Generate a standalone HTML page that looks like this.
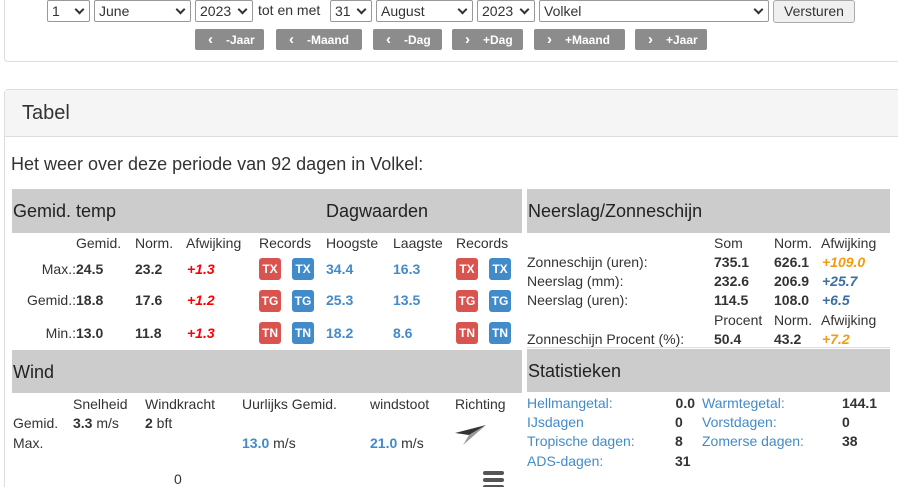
<!DOCTYPE html>
<html style="height:487px;overflow:hidden"><head><meta charset="utf-8"><style>
*{margin:0;padding:0;box-sizing:border-box}
html,body{width:898px;height:487px;overflow:hidden}
body{background:#fff;font-family:"Liberation Sans",sans-serif;color:#333;font-size:14px}
#w{position:relative;width:898px;height:487px;overflow:hidden}
.a{position:absolute;white-space:nowrap}
.sel{position:absolute;top:0;height:22px;border:1px solid #999;border-radius:2px;background:#fff;font-size:14px;padding:1px 4px;line-height:18px}
.sel:after{content:"";position:absolute;right:6px;top:5px;width:5px;height:5px;border-right:2px solid #333;border-bottom:2px solid #333;transform:rotate(45deg)}
.btn{position:absolute;top:29px;height:21px;background:#8c8c8c;color:#fff;font-size:12px;font-weight:bold;line-height:21px;border-radius:2px;padding-left:13px}
.btn b{font-weight:bold;margin-right:13px;font-size:15px}
.bar{position:absolute;background:#ccc;font-size:18px;line-height:44px;padding-left:1px;color:#222}
.bd{position:absolute;width:22px;height:22px;border-radius:3px;color:#fff;font-weight:bold;font-size:12px;text-align:center;line-height:22px}
.r{background:#d9534f}.b{background:#428bca}
.bl{color:#428bca;font-weight:bold}
.bo{font-weight:bold}
.ri{color:#f00;font-weight:bold;font-style:italic}
.or{color:#f39c12;font-weight:bold;font-style:italic}
.bi{color:#3a6ea5;font-weight:bold;font-style:italic}
.lk{color:#428bca}
</style></head><body><div id="w">
<div class="a" style="left:4px;top:0;width:894px;height:62px;border:1px solid #ddd;border-top:none;border-right:none;border-radius:0 0 0 4px"></div>
<div class="sel" style="left:47px;width:43px">1</div>
<div class="sel" style="left:94px;width:97px">June</div>
<div class="sel" style="left:195px;width:58px">2023</div>
<div class="a" style="left:258px;top:2px">tot en met</div>
<div class="sel" style="left:330px;width:42px">31</div>
<div class="sel" style="left:376px;width:97px">August</div>
<div class="sel" style="left:477px;width:58px">2023</div>
<div class="sel" style="left:539px;width:230px">Volkel</div>
<div class="a" style="left:773px;top:0;width:82px;height:23px;border:1px solid #aaa;border-radius:3px;background:#f0f0f0;text-align:center;line-height:21px">Versturen</div>
<div class="btn" style="left:195px;width:69px"><b>‹</b>-Jaar</div>
<div class="btn" style="left:276px;width:86px"><b>‹</b>-Maand</div>
<div class="btn" style="left:373px;width:69px"><b>‹</b>-Dag</div>
<div class="btn" style="left:452px;width:71px"><b>›</b>+Dag</div>
<div class="btn" style="left:534px;width:91px"><b>›</b>+Maand</div>
<div class="btn" style="left:635px;width:72px"><b>›</b>+Jaar</div>

<div class="a" style="left:4px;top:89px;width:894px;height:398px;border:1px solid #ddd;border-bottom:none;border-right:none;border-radius:4px 0 0 0"></div>
<div class="a" style="left:5px;top:90px;width:893px;height:47px;background:#f5f5f5;border-bottom:1px solid #ddd"></div>
<div class="a" style="left:22px;top:102px;font-size:20px">Tabel</div>
<div class="a" style="left:11px;top:154px;font-size:18px">Het weer over deze periode van 92 dagen in Volkel:</div>

<div class="bar" style="left:12px;top:189px;width:510px;height:44px">Gemid. temp<span style="position:absolute;left:314px">Dagwaarden</span></div>
<div class="bar" style="left:527px;top:189px;width:363px;height:44px">Neerslag/Zonneschijn</div>

<div class="a" style="left:76px;top:235px">Gemid.</div>
<div class="a" style="left:135px;top:235px">Norm.</div>
<div class="a" style="left:186px;top:235px">Afwijking</div>
<div class="a" style="left:259px;top:235px">Records</div>
<div class="a" style="left:326px;top:235px">Hoogste</div>
<div class="a" style="left:393px;top:235px">Laagste</div>
<div class="a" style="left:456px;top:235px">Records</div>

<div class="a" style="left:0;width:76px;text-align:right;top:261px">Max.:</div>
<div class="a bo" style="left:76px;top:261px">24.5</div>
<div class="a bo" style="left:135px;top:261px">23.2</div>
<div class="a ri" style="left:187px;top:261px">+1.3</div>
<div class="bd r" style="left:259px;top:258px">TX</div><div class="bd b" style="left:292px;top:258px">TX</div>
<div class="a bl" style="left:326px;top:261px">34.4</div>
<div class="a bl" style="left:393px;top:261px">16.3</div>
<div class="bd r" style="left:456px;top:258px">TX</div><div class="bd b" style="left:489px;top:258px">TX</div>

<div class="a" style="left:0;width:76px;text-align:right;top:292px">Gemid.:</div>
<div class="a bo" style="left:76px;top:292px">18.8</div>
<div class="a bo" style="left:135px;top:292px">17.6</div>
<div class="a ri" style="left:187px;top:292px">+1.2</div>
<div class="bd r" style="left:259px;top:290px">TG</div><div class="bd b" style="left:292px;top:290px">TG</div>
<div class="a bl" style="left:326px;top:292px">25.3</div>
<div class="a bl" style="left:393px;top:292px">13.5</div>
<div class="bd r" style="left:456px;top:290px">TG</div><div class="bd b" style="left:489px;top:290px">TG</div>

<div class="a" style="left:0;width:76px;text-align:right;top:325px">Min.:</div>
<div class="a bo" style="left:76px;top:325px">13.0</div>
<div class="a bo" style="left:135px;top:325px">11.8</div>
<div class="a ri" style="left:187px;top:325px">+1.3</div>
<div class="bd r" style="left:259px;top:322px">TN</div><div class="bd b" style="left:292px;top:322px">TN</div>
<div class="a bl" style="left:326px;top:325px">18.2</div>
<div class="a bl" style="left:393px;top:325px">8.6</div>
<div class="bd r" style="left:456px;top:322px">TN</div><div class="bd b" style="left:489px;top:322px">TN</div>

<div class="a" style="left:714px;top:235px">Som</div>
<div class="a" style="left:774px;top:235px">Norm.</div>
<div class="a" style="left:821px;top:235px">Afwijking</div>
<div class="a" style="left:527px;top:254px">Zonneschijn (uren):</div>
<div class="a bo" style="left:714px;top:254px">735.1</div><div class="a bo" style="left:774px;top:254px">626.1</div><div class="a or" style="left:822px;top:254px">+109.0</div>
<div class="a" style="left:527px;top:273px">Neerslag (mm):</div>
<div class="a bo" style="left:714px;top:273px">232.6</div><div class="a bo" style="left:774px;top:273px">206.9</div><div class="a bi" style="left:822px;top:273px">+25.7</div>
<div class="a" style="left:527px;top:292px">Neerslag (uren):</div>
<div class="a bo" style="left:714px;top:292px">114.5</div><div class="a bo" style="left:774px;top:292px">108.0</div><div class="a bi" style="left:822px;top:292px">+6.5</div>
<div class="a" style="left:714px;top:312px">Procent</div>
<div class="a" style="left:774px;top:312px">Norm.</div>
<div class="a" style="left:821px;top:312px">Afwijking</div>
<div class="a" style="left:527px;top:331px">Zonneschijn Procent (%):</div>
<div class="a bo" style="left:714px;top:331px">50.4</div><div class="a bo" style="left:774px;top:331px">43.2</div><div class="a or" style="left:822px;top:331px">+7.2</div>
<div class="a" style="left:527px;top:347px;width:363px;height:1px;background:#ddd"></div>

<div class="bar" style="left:12px;top:350px;width:510px;height:43px">Wind</div>
<div class="bar" style="left:527px;top:349px;width:363px;height:43px">Statistieken</div>

<div class="a" style="left:73px;top:396px">Snelheid</div>
<div class="a" style="left:145px;top:396px">Windkracht</div>
<div class="a" style="left:242px;top:396px">Uurlijks Gemid.</div>
<div class="a" style="left:370px;top:396px">windstoot</div>
<div class="a" style="left:455px;top:396px">Richting</div>
<div class="a" style="left:13px;top:415px">Gemid.</div>
<div class="a" style="left:73px;top:415px"><b>3.3</b> m/s</div>
<div class="a" style="left:145px;top:415px"><b>2</b> bft</div>
<div class="a" style="left:13px;top:435px">Max.</div>
<div class="a" style="left:242px;top:435px"><span class="bl">13.0</span> m/s</div>
<div class="a" style="left:370px;top:435px"><span class="bl">21.0</span> m/s</div>
<svg class="a" style="left:454px;top:423px" width="34" height="24" viewBox="0 0 34 24"><path d="M1 10 L32 2 L15 12 Z" fill="#333"/><path d="M15 12 L32 2 L9 22 Z" fill="#999"/></svg>
<div class="a" style="left:174px;top:471px;line-height:16px">0</div>
<div class="a" style="left:483px;top:471px;width:21px;height:4px;background:#555;border-radius:2px"></div>
<div class="a" style="left:483px;top:478px;width:21px;height:4px;background:#555;border-radius:2px"></div>
<div class="a" style="left:483px;top:485px;width:21px;height:2px;background:#555;border-radius:2px 2px 0 0"></div>

<div class="a lk" style="left:527px;top:395px">Hellmangetal:</div><div class="a bo" style="left:640px;width:55px;text-align:right;top:395px">0.0</div>
<div class="a lk" style="left:702px;top:395px">Warmtegetal:</div><div class="a bo" style="left:842px;top:395px">144.1</div>
<div class="a lk" style="left:527px;top:414px">IJsdagen</div><div class="a bo" style="left:675px;top:414px">0</div>
<div class="a lk" style="left:702px;top:414px">Vorstdagen:</div><div class="a bo" style="left:842px;top:414px">0</div>
<div class="a lk" style="left:527px;top:433px">Tropische dagen:</div><div class="a bo" style="left:675px;top:433px">8</div>
<div class="a lk" style="left:702px;top:433px">Zomerse dagen:</div><div class="a bo" style="left:842px;top:433px">38</div>
<div class="a lk" style="left:527px;top:453px">ADS-dagen:</div><div class="a bo" style="left:675px;top:453px">31</div>
</div></body></html>
